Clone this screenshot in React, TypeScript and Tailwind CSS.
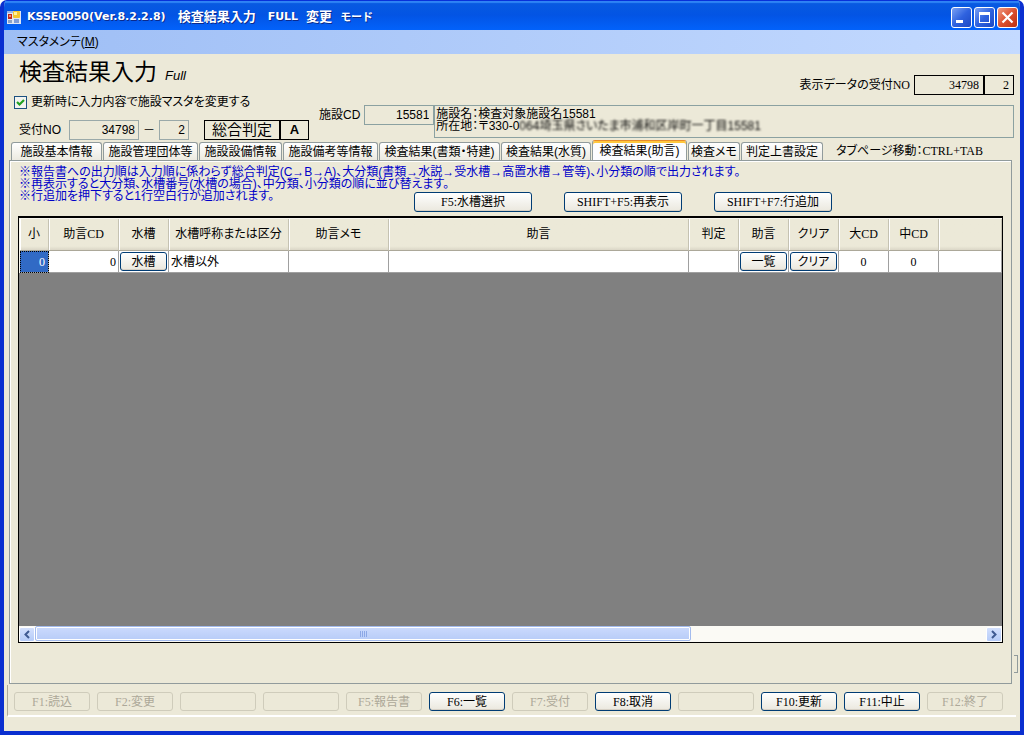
import React, { useState } from "react";

const tabs = [
  { label: "施設基本情報", width: "w-[91px]" },
  { label: "施設管理団体等", width: "w-[95px]" },
  { label: "施設設備情報", width: "w-[83px]" },
  { label: "施設備考等情報", width: "w-[95px]" },
  { label: "検査結果(書類・特建)", width: "w-[121px]" },
  { label: "検査結果(水質)", width: "w-[90px]" },
  { label: "検査結果(助言)", width: "w-[95px]" },
  { label: "検査メモ", width: "w-[52px]" },
  { label: "判定上書設定", width: "w-[82px]" },
];

const columns = [
  { label: "小", width: "w-[29px]" },
  { label: "助言CD", width: "w-[70px]" },
  { label: "水槽", width: "w-[50px]" },
  { label: "水槽呼称または区分", width: "w-[120px]" },
  { label: "助言メモ", width: "w-[100px]" },
  { label: "助言", width: "w-[300px]" },
  { label: "判定", width: "w-[50px]" },
  { label: "助言", width: "w-[50px]" },
  { label: "クリア", width: "w-[50px]" },
  { label: "大CD", width: "w-[50px]" },
  { label: "中CD", width: "w-[50px]" },
  { label: "", width: "" },
];

const functionKeys = [
  { label: "F1:読込", enabled: false },
  { label: "F2:変更", enabled: false },
  { label: "", enabled: false },
  { label: "", enabled: false },
  { label: "F5:報告書", enabled: false },
  { label: "F6:一覧", enabled: true },
  { label: "F7:受付", enabled: false },
  { label: "F8:取消", enabled: true },
  { label: "", enabled: false },
  { label: "F10:更新", enabled: true },
  { label: "F11:中止", enabled: true },
  { label: "F12:終了", enabled: false },
];

const serif = "font-['Liberation_Serif','Noto_Sans_CJK_JP',serif]";
const xpButton =
  "rounded-[3px] border border-[#003c74] bg-linear-to-b from-white via-[#f4f3ee] to-[#ebe8de] text-center whitespace-nowrap shadow-[inset_0_-1px_0_#d6d0c5]";

function AppIcon() {
  return (
    <svg width="14" height="14" viewBox="0 0 14 14" aria-hidden="true">
      <rect x="0" y="1" width="14" height="13" fill="#dfe6f3" />
      <rect x="0" y="1" width="6" height="2" fill="#9db6e6" />
      <rect x="1" y="4" width="4" height="5" fill="#c22a1c" />
      <rect x="2" y="5" width="2" height="2" fill="#f08a6c" />
      <rect x="6" y="1" width="7" height="7" rx="1" fill="#f3c62f" />
      <rect x="7" y="2" width="3" height="3" fill="#fff0a0" />
      <rect x="1" y="10" width="4" height="3" fill="#8fa3c4" />
      <rect x="7" y="9" width="5" height="4" fill="#7d9bd8" />
    </svg>
  );
}

function WindowButton({ kind }: { kind: "min" | "max" | "close" }) {
  const color =
    kind === "close"
      ? "bg-linear-to-br from-[#ee9a80] via-[#dc5030] to-[#b8300f]"
      : "bg-linear-to-br from-[#7ba0f3] via-[#2f62df] to-[#1c48c4]";
  const name = kind === "min" ? "最小化" : kind === "max" ? "最大化" : "閉じる";
  return (
    <button aria-label={name} className={`flex size-[21px] items-center justify-center rounded-[3px] border border-white ${color}`}>
      <svg width="19" height="19" viewBox="0 0 19 19" aria-hidden="true">
        {kind === "min" && <rect x="4" y="12" width="7" height="3" fill="#fff" />}
        {kind === "max" && (
          <>
            <rect x="4.5" y="4.5" width="10" height="10" fill="none" stroke="#fff" />
            <rect x="4" y="4" width="11" height="3" fill="#fff" />
          </>
        )}
        {kind === "close" && <path d="M4.5 4.5 14.5 14.5M14.5 4.5 4.5 14.5" stroke="#fff" strokeWidth="2.2" />}
      </svg>
    </button>
  );
}

function ScrollArrow({ left }: { left?: boolean }) {
  return (
    <button
      aria-label={left ? "左へスクロール" : "右へスクロール"}
      className="flex h-[15px] w-4 shrink-0 items-center justify-center rounded-[2px] border border-white bg-linear-to-b from-[#d3e0fd] to-[#b5cbf8]"
    >
      <svg width="8" height="9" viewBox="0 0 8 9" aria-hidden="true">
        <path d={left ? "M6 1 2.5 4.5 6 8" : "M2 1 5.5 4.5 2 8"} fill="none" stroke="#3f5a92" strokeWidth="2" />
      </svg>
    </button>
  );
}

export default function App() {
  const [active, setActive] = useState(6);
  const [update, setUpdate] = useState(true);

  return (
    <div className="flex min-h-screen flex-col bg-white font-['Liberation_Sans','Noto_Sans_CJK_JP',sans-serif] text-[12px] leading-3 text-black [font-feature-settings:'palt']">
      <div className="relative flex flex-1 flex-col overflow-hidden rounded-t-[7px] border-x-4 border-b-4 border-[#0a2fd0] bg-[#ece9d8]">
        <header className="-mx-1 flex h-[30px] shrink-0 items-center justify-between bg-linear-to-b from-[#0a5be0] via-[#0354e4] to-[#0262fb] pt-1 pr-[6px] pl-[7px] shadow-[inset_0_1px_0_#0831d9,inset_0_3px_1px_#2f83f5]">
          <div className="flex items-center gap-[6px]">
            <AppIcon />
            <h1 className="flex items-center gap-2 text-[13px] font-bold whitespace-nowrap text-white [font-feature-settings:normal] [text-shadow:1px_1px_0_#0a2a8c]">
              <span className="font-['DejaVu_Sans',sans-serif] text-[11px]">KSSE0050(Ver.8.2.2.8)</span>
              <span className="pl-1">検査結果入力</span>
              <span className="pl-1 font-['DejaVu_Sans',sans-serif] text-[11px]">FULL</span>
              <span>変更</span>
              <span className="text-[11px]">モード</span>
            </h1>
          </div>
          <div className="flex gap-[2px]">
            <WindowButton kind="min" />
            <WindowButton kind="max" />
            <WindowButton kind="close" />
          </div>
        </header>

        <nav className="flex h-6 shrink-0 items-center bg-linear-to-r from-[#9ebef5] to-[#c4daff] px-[13px]">
          <button className="whitespace-nowrap">
            マスタメンテ(<u>M</u>)
          </button>
        </nav>

        <section className="flex h-[86px] shrink-0 pr-[6px]">
          <div className="flex w-[315px] shrink-0 flex-col pl-[10px]">
            <div className="flex h-9 items-end gap-2 pl-[5px]">
              <h2 className="pb-[2px] text-[23px] leading-8 whitespace-nowrap">検査結果入力</h2>
              <span className="pb-2 text-[13px] italic">Full</span>
            </div>
            <label className="flex h-6 items-center gap-1 whitespace-nowrap">
              <span className="grid size-[13px] place-items-center">
                <input
                  type="checkbox"
                  checked={update}
                  onChange={() => setUpdate(!update)}
                  className="col-start-1 row-start-1 size-[13px] appearance-none border border-[#1c5180] bg-[#f3f3ef]"
                />
                {update && (
                  <svg className="pointer-events-none col-start-1 row-start-1" width="9" height="9" viewBox="0 0 9 9" aria-hidden="true">
                    <path d="M1 4 3.5 6.5 8 2" fill="none" stroke="#21a121" strokeWidth="2.2" />
                  </svg>
                )}
              </span>
              更新時に入力内容で施設マスタを変更する
            </label>
            <div className="flex items-start gap-2 pt-[6px] pl-[5px]">
              <label htmlFor="receipt" className="leading-5 whitespace-nowrap">受付NO</label>
              <input id="receipt" readOnly value="34798" className="h-5 w-[70px] border border-[#9aa9a9] bg-transparent px-[3px] text-right" />
              <span className="-mx-1 leading-5">－</span>
              <input aria-label="受付枝番" readOnly value="2" className="h-5 w-[30px] border border-[#9aa9a9] bg-transparent px-[3px] text-right" />
              <div className="ml-[7px] flex h-5 border border-black">
                <span className="w-[74px] text-center text-[15px] leading-[18px] whitespace-nowrap">総合判定</span>
                <span className="w-[29px] border-l-2 border-black text-center text-[13px] leading-[18px] font-bold">A</span>
              </div>
            </div>
          </div>

          <div className="flex min-w-0 flex-1 flex-col pt-[21px]">
            <div className={`flex items-center justify-end ${serif}`}>
              <label htmlFor="shown" className="pr-1 whitespace-nowrap">表示データの受付NO</label>
              <input id="shown" readOnly value="34798" className="h-5 w-[70px] border border-black bg-transparent px-1 text-right" />
              <input aria-label="表示データの枝番" readOnly value="2" className="h-5 w-[30px] border border-black bg-transparent px-1 text-right" />
            </div>
            <div className="flex items-start pt-[10px]">
              <label htmlFor="facility" className="pr-1 leading-5 whitespace-nowrap">施設CD</label>
              <input id="facility" readOnly value="15581" className="h-5 w-[70px] border border-[#8ba1a1] bg-transparent px-1 text-right" />
              <div className="h-[33px] min-w-0 flex-1 border border-[#8ba1a1] px-px pt-[2px] whitespace-nowrap">
                <p>施設名：検査対象施設名15581</p>
                <p>
                  所在地：〒330-0<span className="text-black blur-[1px]">064埼玉県さいたま市浦和区岸町一丁目15581</span>
                </p>
              </div>
            </div>
          </div>
        </section>

        <div className="flex h-5 shrink-0 items-end gap-px pl-[7px]" role="tablist">
          {tabs.map((tab, i) => (
            <button
              key={tab.label}
              role="tab"
              aria-selected={i === active}
              onClick={() => setActive(i)}
              className={`${tab.width} rounded-t-[3px] border border-b-0 text-center whitespace-nowrap ${
                i === active
                  ? "h-5 border-[#919b9c] border-t-[#e68b2c] bg-[#fcfcfe] shadow-[inset_0_2px_0_#ffc73c]"
                  : "h-[18px] border-[#919b9c] bg-linear-to-b from-white to-[#eceae0]"
              }`}
            >
              {tab.label}
            </button>
          ))}
          <span className={`pb-[3px] pl-3 whitespace-nowrap ${serif}`}>タブページ移動：CTRL+TAB</span>
        </div>

        <main className="mr-2 ml-[5px] flex flex-1 flex-col border border-[#919b9c] pr-2 pb-10 pl-2 shadow-[inset_1px_1px_0_#fff]">
          <div className="flex h-[55px] shrink-0 flex-col pt-[5px] pl-px text-[#0000c8]">
            <p className="whitespace-nowrap">※報告書への出力順は入力順に係わらず総合判定(C→B→A)、大分類(書類→水説→受水槽→高置水槽→管等)、小分類の順で出力されます。</p>
            <p className="whitespace-nowrap">※再表示すると大分類、水槽番号(水槽の場合)、中分類、小分類の順に並び替えます。</p>
            <div className="flex justify-between">
              <p className="whitespace-nowrap">※行追加を押下すると1行空白行が追加されます。</p>
              <div className={`flex gap-8 pr-[171px] pt-[2px] text-black ${serif}`}>
                <button className={`h-5 w-[118px] ${xpButton}`}>F5:水槽選択</button>
                <button className={`h-5 w-[118px] ${xpButton}`}>SHIFT+F5:再表示</button>
                <button className={`h-5 w-[118px] ${xpButton}`}>SHIFT+F7:行追加</button>
              </div>
            </div>
          </div>

          <div className="flex flex-1 flex-col border border-t-2 border-black bg-[#808080]">
            <div className="border-t border-l border-[#f6f4ec]">
              <table className={`w-full table-fixed border-separate border-spacing-0 ${serif}`}>
                <colgroup>
                  {columns.map((c, i) => (
                    <col key={i} className={c.width} />
                  ))}
                </colgroup>
                <thead>
                  <tr className="h-8 bg-linear-to-b from-[#ece9d8] from-85% to-[#d6d2c2]">
                    {columns.map((c, i) => (
                      <th key={i} className="border-r border-b border-r-[#c5c2b2] border-b-[#aca899] p-0 pb-[2px] font-normal whitespace-nowrap shadow-[inset_1px_0_0_#fff]">
                        {c.label}
                      </th>
                    ))}
                  </tr>
                </thead>
                <tbody>
                  <tr className="h-[22px] bg-white [&>td]:border-r [&>td]:border-b [&>td]:border-[#a0a0a0] [&>td]:p-0 [&>td]:whitespace-nowrap">
                    <td className="bg-[#316ac5] text-right text-white outline-1 -outline-offset-1 outline-black outline-dotted">
                      <span className="pr-[3px]">0</span>
                    </td>
                    <td className="text-right"><span className="pr-[2px]">0</span></td>
                    <td className="text-center"><button className={`h-[19px] w-[47px] ${xpButton}`}>水槽</button></td>
                    <td><span className="pl-[2px]">水槽以外</span></td>
                    <td />
                    <td />
                    <td />
                    <td className="text-center"><button className={`h-[19px] w-[47px] ${xpButton}`}>一覧</button></td>
                    <td className="text-center"><button className={`h-[19px] w-[47px] ${xpButton}`}>クリア</button></td>
                    <td className="text-center">0</td>
                    <td className="text-center">0</td>
                    <td />
                  </tr>
                </tbody>
              </table>
            </div>
            <div className="flex-1" />
            <div className="flex h-4 items-center bg-[#fbfaf5]">
              <ScrollArrow left />
              <div className="flex h-full flex-1">
                <div className="flex h-[15px] w-[69%] items-center justify-center gap-px rounded-[2px] border border-[#a3bbee] bg-linear-to-b from-[#cbdafd] to-[#b8ccf8] shadow-[inset_0_0_0_1px_#fff]">
                  <span className="h-[6px] w-px bg-[#8ca8e6]" />
                  <span className="h-[6px] w-px bg-[#8ca8e6]" />
                  <span className="h-[6px] w-px bg-[#8ca8e6]" />
                  <span className="h-[6px] w-px bg-[#8ca8e6]" />
                </div>
              </div>
              <ScrollArrow />
            </div>
          </div>
        </main>

        <footer className={`mt-px mr-1 mb-[14px] ml-[3px] flex h-8 shrink-0 items-start gap-[7px] border-l border-[#aca899] border-b-2 border-b-white pt-[7px] pl-[6px] ${serif}`}>
          {functionKeys.map((key, i) => (
            <button
              key={i}
              disabled={!key.enabled}
              aria-label={key.label || `F${i + 1}`}
              className={`h-[19px] w-[76px] ${
                key.enabled ? xpButton : "rounded-[3px] border border-[#cfccbb] text-center whitespace-nowrap text-[#aca899]"
              }`}
            >
              {key.label}
            </button>
          ))}
        </footer>
        <div className="absolute right-[2px] bottom-[58px] h-[18px] w-1 border border-l-0 border-[#919b9c]" />
      </div>
    </div>
  );
}
